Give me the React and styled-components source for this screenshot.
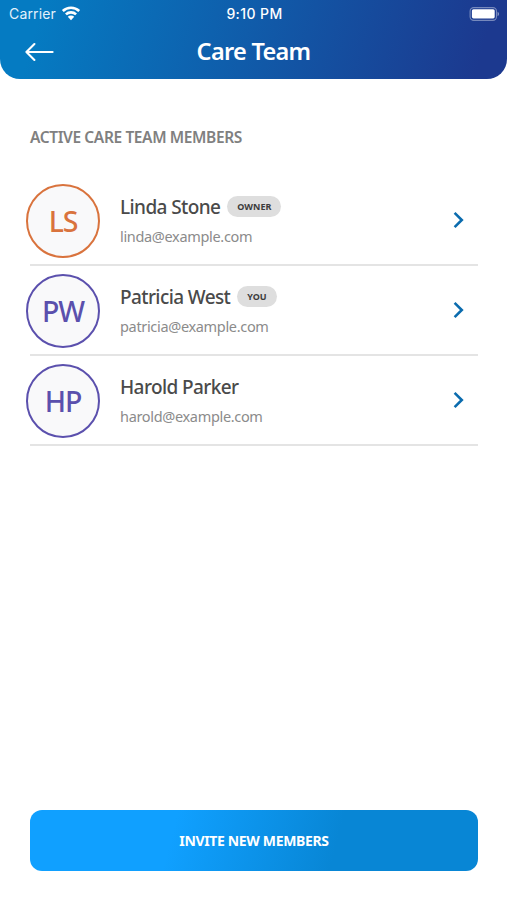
import styled, { createGlobalStyle } from "styled-components";

const members = [
  { initials: "LS", name: "Linda Stone", email: "linda@example.com", tag: "Owner", color: "#d9733d" },
  { initials: "PW", name: "Patricia West", email: "patricia@example.com", tag: "You", color: "#5b50ad" },
  { initials: "HP", name: "Harold Parker", email: "harold@example.com", color: "#5b50ad" },
];

const WifiIcon = () => (
  <svg width="20" height="15" viewBox="0 0 20 15" fill="none" stroke="#fff" strokeWidth="2.6">
    <path d="M1.8 5a11.8 11.8 0 0 1 16.4 0" />
    <path d="M4.9 8.4a7.4 7.4 0 0 1 10.2 0" />
    <path d="M10 14.2l-3.2-3.5a4.6 4.6 0 0 1 6.4 0z" fill="#fff" stroke="none" />
  </svg>
);

const BatteryIcon = () => (
  <svg width="31" height="14" viewBox="0 0 31 14">
    <rect x="1.1" y="0.6" width="26.4" height="12.8" rx="3.6" fill="none" stroke="#fff" strokeOpacity="0.4" strokeWidth="1.1" />
    <rect x="2.9" y="2.2" width="22.8" height="9.2" rx="1.6" fill="#fff" />
    <path d="M28.6 4.8c1.9.8 1.9 3.6 0 4.4z" fill="#fff" fillOpacity="0.5" />
  </svg>
);

const BackIcon = () => (
  <svg width="30" height="20" viewBox="0 0 30 20" fill="none" stroke="#fff" strokeWidth="2.1" strokeLinecap="round" strokeLinejoin="round">
    <path d="M27.6 10H1.4M9.4 2l-8 8 8 8" />
  </svg>
);

const ChevronIcon = () => (
  <svg width="12" height="18" viewBox="0 0 12 18" fill="none" stroke="#0b6cae" strokeWidth="2.6">
    <path d="M1.6 1.9L8.8 9l-7.2 7.1" />
  </svg>
);

const App = () => {
  return (
    <Screen>
      <GlobalStyle />
      <Header>
        <StatusBar>
          <Carrier>
            <span>Carrier</span>
            <WifiIcon />
          </Carrier>
          <Clock>9:10 PM</Clock>
          <Battery>
            <BatteryIcon />
          </Battery>
        </StatusBar>
        <NavBar>
          <BackButton aria-label="Back">
            <BackIcon />
          </BackButton>
          <Title>Care Team</Title>
        </NavBar>
      </Header>
      <Content>
        <SectionTitle>Active care team members</SectionTitle>
        <MemberList>
          {members.map(({ initials, name, email, tag, color }) => (
            <Member key={email}>
              <Avatar $color={color}>{initials}</Avatar>
              <Info>
                <NameRow>
                  <Name>{name}</Name>
                  {tag && <Tag>{tag}</Tag>}
                </NameRow>
                <Email>{email}</Email>
              </Info>
              <ChevronIcon />
            </Member>
          ))}
        </MemberList>
      </Content>
      <InviteButton>Invite new members</InviteButton>
    </Screen>
  );
};

const GlobalStyle = createGlobalStyle`
  * {
    box-sizing: border-box;
  }
  body {
    margin: 0;
    background: #fff;
    font-family: "Noto Sans", "Open Sans", sans-serif;
  }
  h1, h2, p, ul {
    margin: 0;
    padding: 0;
  }
  button {
    border: 0;
    padding: 0;
    font-family: inherit;
  }
  svg {
    display: block;
    flex: none;
  }
`;

const Screen = styled.main`
  display: flex;
  flex-direction: column;
  height: 900px;
  padding-bottom: 29px;
`;

const Header = styled.header`
  height: 79px;
  border-radius: 0 0 20px 20px;
  background: linear-gradient(105deg, #057bc2 8%, #1c398f 94%);
  color: #fff;
`;

const StatusBar = styled.div`
  display: grid;
  grid-template-columns: 1fr auto 1fr;
  align-items: center;
  height: 27px;
  padding: 0 7px 0 9px;
  font-family: Inter, "Liberation Sans", sans-serif;
  font-size: 14px;
`;

const Carrier = styled.div`
  display: flex;
  align-items: center;
  gap: 5px;
  color: #e3f1fb;
  letter-spacing: 0.15px;
`;

const Clock = styled.div`
  font-weight: 500;
  font-size: 14px;
  letter-spacing: 0.4px;
`;

const Battery = styled.div`
  display: flex;
  justify-content: flex-end;
`;

const NavBar = styled.div`
  display: grid;
  grid-template-columns: 56px 1fr 56px;
  align-items: center;
  height: 49px;
`;

const BackButton = styled.button`
  display: flex;
  justify-content: flex-end;
  padding-right: 1px;
  background: none;
`;

const Title = styled.h1`
  padding-bottom: 2px;
  font-size: 23.5px;
  font-weight: 600;
  line-height: 32px;
  letter-spacing: -0.7px;
  text-align: center;
`;

const Content = styled.section`
  flex: 1;
  padding: 47px 29px 0 30px;
`;

const SectionTitle = styled.h2`
  color: #808080;
  font-size: 15.5px;
  font-weight: 600;
  line-height: 22px;
  letter-spacing: -0.38px;
  text-transform: uppercase;
  white-space: nowrap;
`;

const MemberList = styled.ul`
  margin-top: 28px;
  list-style: none;
`;

const Member = styled.li`
  display: flex;
  align-items: center;
  height: 90px;
  padding-right: 13px;
  border-bottom: 2px solid #e4e4e4;
`;

const Avatar = styled.div`
  display: flex;
  flex: none;
  align-items: center;
  justify-content: center;
  width: 74px;
  height: 74px;
  margin: 2px 0 0 -4px;
  border: 2px solid ${({ $color }) => $color};
  border-radius: 50%;
  background: #f9f9fa;
  color: ${({ $color }) => $color};
  font-size: 28.5px;
  font-weight: 500;
  letter-spacing: -1.2px;
`;

const Info = styled.div`
  flex: 1;
  margin: 2px 0 0 20px;
`;

const NameRow = styled.div`
  display: flex;
  align-items: center;
  gap: 7px;
  height: 30px;
`;

const Name = styled.p`
  padding-top: 2px;
  color: #4a4a4a;
  font-size: 19px;
  font-weight: 500;
  letter-spacing: -0.6px;
  white-space: nowrap;
`;

const Tag = styled.span`
  padding: 0 10px;
  border-radius: 11px;
  background: #dedede;
  color: #3c3c3c;
  font-size: 9px;
  font-weight: 700;
  line-height: 21px;
  text-transform: uppercase;
`;

const Email = styled.p`
  height: 30px;
  color: #8b8b8b;
  font-size: 14.5px;
  line-height: 30px;
  letter-spacing: -0.33px;
`;

const InviteButton = styled.button`
  height: 61px;
  margin: 0 29px 0 30px;
  border-radius: 12px;
  background: linear-gradient(105deg, #10a0ff 32%, #0886d5 68%);
  color: #fff;
  font-size: 14px;
  font-weight: 700;
  letter-spacing: -0.35px;
  text-transform: uppercase;
`;

export default App;
